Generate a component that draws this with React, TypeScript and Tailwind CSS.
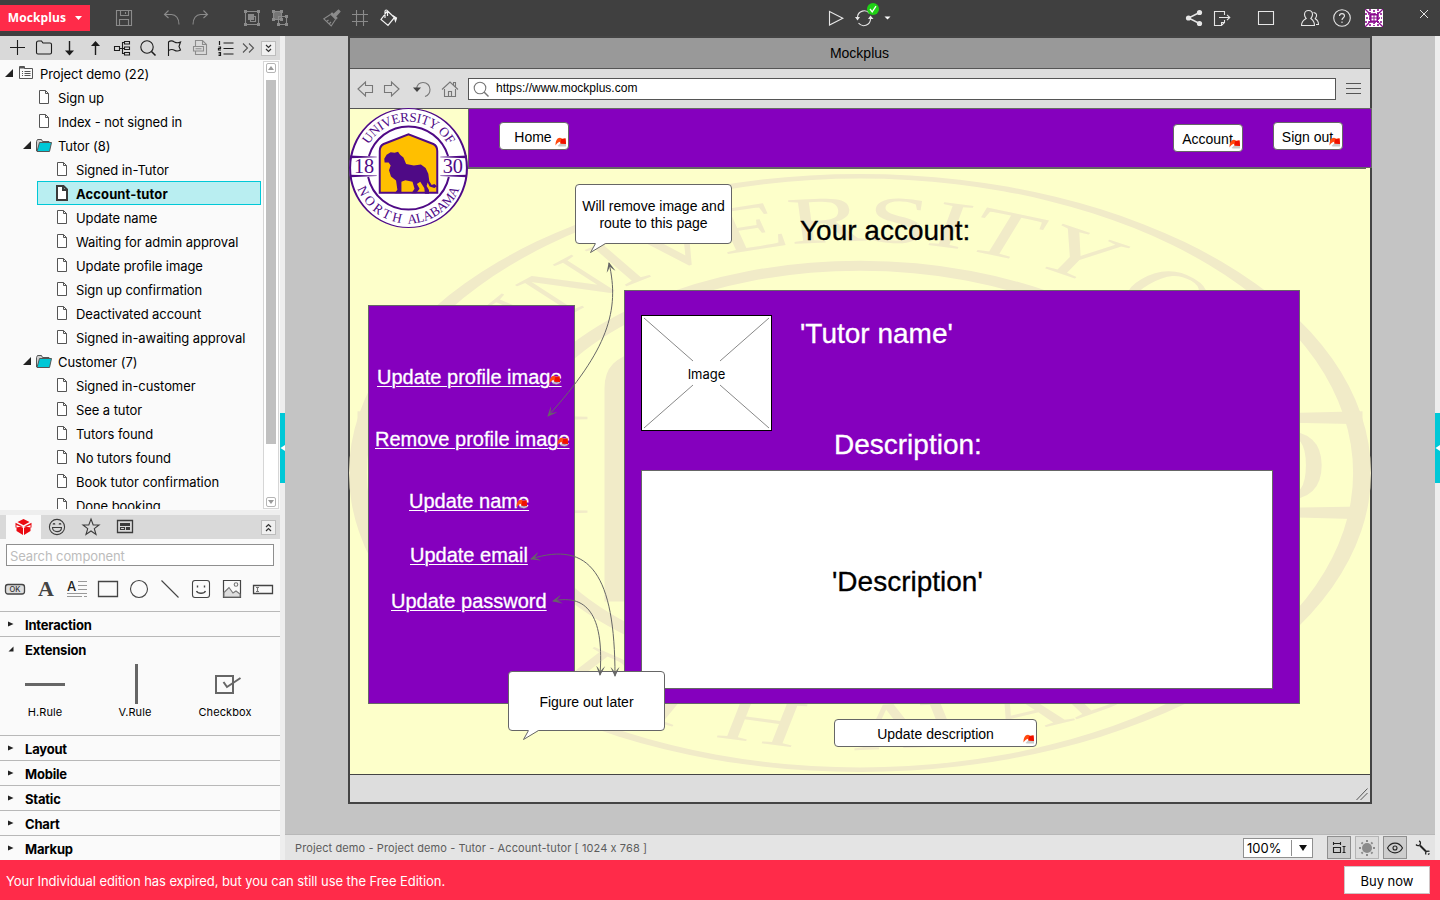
import React from "react";

type IconProps = { children: React.ReactNode; className?: string; size?: number; sw?: number };

function Icon({ children, className = "", size = 18, sw = 1.1 }: IconProps) {
  return (
    <svg
      width={size}
      height={18}
      viewBox={`0 0 ${size} 18`}
      fill="none"
      stroke="currentColor"
      strokeWidth={sw}
      className={`block shrink-0 overflow-visible ${className}`}
    >
      {children}
    </svg>
  );
}

function Seal({ ink, gold, field, className }: { ink: string; gold: string; field: string; className: string }) {
  const id = "seal" + ink.slice(1);
  return (
    <svg viewBox="0 0 120 120" preserveAspectRatio="none" className={className}>
      <defs>
        <path id={id + "t"} d="M19.8 36.8 A46.4 46.4 0 0 1 100.2 36.8" />
        <path id={id + "b"} d="M8.6 80.7 A55.4 55.4 0 0 0 111.4 80.7" />
      </defs>
      <circle cx="60" cy="60" r="59.7" fill={field} />
      <path
        fill={ink}
        fillRule="evenodd"
        d="M0 60 A60 60 0 0 1 120 60 A60 60 0 0 1 0 60 Z M2.1 60 A57.9 59.1 0 0 0 117.9 60 A57.9 59.1 0 0 0 2.1 60 Z"
      />
      <path d="M20.1 48 A41.7 41.7 0 0 1 99.9 48 M19.3 69 A41.7 41.7 0 0 0 100.7 69" fill="none" stroke={ink} strokeWidth="2" />
      <path
        fill={ink}
        d="M1 47.6 L28 48.7 V49.2 L1 50.2 Z M1 66.7 L28 67.5 V68 L1 69.3 Z M119 47.6 L92 48.7 V49.2 L119 50.2 Z M119 66.7 L92 67.5 V68 L119 69.3 Z"
      />
      <g fill={ink} fontFamily="'Liberation Serif', serif" fontSize="13.4">
        <text>
          <textPath href={`#${id}t`} textLength="97">UNIVERSITY OF</textPath>
        </text>
        <text>
          <textPath href={`#${id}b`} textLength="58">NORTH</textPath>
        </text>
        <text>
          <textPath href={`#${id}b`} startOffset="65" textLength="66">ALABAMA</textPath>
        </text>
        <text x="5" y="65.2" fontSize="20.5">18</text>
        <text x="94.500" y="65.2" fontSize="20.5">30</text>
      </g>
      <path d="M31 84.8 V43 C31 39 32 37.5 35 36 L60 26.3 L85 36 C88 37.5 89 39 89 43 V84.8 Z" fill={gold} stroke={ink} strokeWidth="2" />
      <g transform="translate(-4.1,-38.7) scale(.339)">
        <path
          fill={ink}
          d="M117 264 L124 252 L136 245 L148 246 L158 243 L164 252 L174 260 L182 279 L205 284 L226 281 L240 291 L248 308 L251 330 L258 341 L266 338 L274 345 L266 350 L252 346 L246 334 L243 344 L250 356 L250 367 L238 367 L236 350 L224 332 L214 338 L222 352 L212 366 L198 366 L207 352 L201 332 L180 327 L168 332 L168 366 L148 366 L156 355 L152 328 L137 316 L131 298 L136 284 L130 275 L118 275 Z"
        />
      </g>
    </svg>
  );
}

/* ---------- top bar ---------- */

function TopBar() {
  return (
    <header className="flex h-9 shrink-0 items-center bg-[#404040] text-[#8b8b8b]">
      <button className="flex h-[26px] w-[90px] items-center bg-[#ff2b49] pl-[7px] font-['Open_Sans',sans-serif] text-[12px] font-bold text-white">
        <span className="w-[60px] tracking-[0.1px]">Mockplus</span>
        <svg width="7" height="4" viewBox="0 0 7 4" className="ml-2"><path d="M0 0H7L3.5 4Z" fill="#fff" /></svg>
      </button>
      <Icon className="ml-[25px]">
        <path d="M1.5 1.5h15v15h-15zM5.5 1.5v5h8v-5M4.500 16.500v-6h9v6M10.500 3v2" />
      </Icon>
      <Icon className="ml-[30px]"><path d="M1.500 5.500H8.500C13 5.500 16 9.500 16 15.500M5.500 1.500L1.500 5.500L5.500 9" /></Icon>
      <Icon className="ml-[10px]"><path d="M16.500 5.500H9.500C5 5.500 2 9.500 2 15.500M12.500 1.500L16.500 5.500L12.500 9" /></Icon>
      <Icon className="ml-[34px]">
        <path d="M2.500 2.500h13v13h-13z" /><path d="M1 1h3v3h-3zM14 1h3v3h-3zM1 14h3v3h-3zM14 14h3v3h-3z" fill="currentColor" stroke="none" />
        <path d="M5.500 5.500h5v5h-5z" fill="currentColor" /><path d="M10.500 7.500h2v5h-5v-2" />
      </Icon>
      <Icon className="ml-[10px]">
        <path d="M2.500 2.500h8v8h-8z" fill="currentColor" fillOpacity=".7" /><path d="M7.500 7.500h8v8h-8z" />
        <path d="M1 1h3v3h-3zM9 1h3v3h-3zM1 9h3v3h-3zM9 9h3v3h-3zM14 6h3v3h-3zM6 14h3v3h-3zM14 14h3v3h-3z" fill="currentColor" stroke="none" />
      </Icon>
      <Icon className="ml-[34px]">
        <path d="M10.500 5.500L15.500 1L17 2.500L12.700 7.500M9 4L14 9L12.800 10.200L7.800 5.200Z" fill="currentColor" />
        <path d="M7.500 5.500L.8 9.800L8.200 17L12.500 10.500M3.500 12.500L5.500 11M6 15L8 13" />
      </Icon>
      <Icon className="ml-[10px]"><path d="M5.500 1v16M12.500 1v16M1 5.500h16M1 12.500h16" /></Icon>
      <Icon className="ml-[11px] text-[#f2f2f2]" sw={1.2}>
        <path d="M5.500 4.500L1 10.500L8 16.500L14.500 8.500L7.500 2Z M5 9V2.500C5 .5 7.500 .5 7.500 2.500V7" />
        <path d="M12.500 6.500L16.500 9L15.500 12L14.500 9Z" fill="currentColor" />
      </Icon>

      <Icon className="ml-[429px] text-[#e6e6e6]"><path d="M2.500 2.500L15.800 9.200L2.500 16Z" /></Icon>
      <div className="relative ml-[10px] text-[#e6e6e6]">
        <Icon>
          <path d="M2.500 8A6.700 6.700 0 0 1 14.500 4.500M15.500 10A6.700 6.700 0 0 1 3.500 14" />
          <path d="M0 8h5l-2.500 3.500zM13 10h5.500l-3 -3.500z" fill="currentColor" stroke="none" />
        </Icon>
        <svg width="12" height="12" viewBox="0 0 12 12" className="absolute -top-[6px] left-3">
          <circle cx="6" cy="6" r="6" fill="#1fd115" /><path d="M3 6L5.200 8.800L9 3.200" fill="none" stroke="#fff" strokeWidth="1.300" />
        </svg>
      </div>
      <svg width="7" height="4" viewBox="0 0 7 4" className="ml-[11px]"><path d="M.5 .5H6.500L3.500 3.500Z" fill="#fff" /></svg>

      <Icon className="ml-[294px] text-[#e6e6e6]" sw={1.4}>
        <path d="M14.500 3.500L3.500 9L14.500 14.500" />
        <g fill="currentColor" stroke="none"><circle cx="14.500" cy="3.500" r="2.600" /><circle cx="3.500" cy="9" r="2.600" /><circle cx="14.500" cy="14.500" r="2.600" /></g>
      </Icon>
      <Icon className="ml-[10px] text-[#e6e6e6]"><path d="M11.500 6V2.500H1.500V16.500H8.500L11.500 13.500V11M8.500 16.500V13.500H11.500M6 8.500H16.500M14 5.800L16.800 8.500L14 11.200" /></Icon>
      <Icon className="ml-[26px] text-[#e6e6e6]"><path d="M1.500 2.500h15v13h-15z" /></Icon>
      <Icon className="ml-[26px] text-[#e6e6e6]">
        <path d="M7.500 1.500C10 1.500 11.500 3 11.500 5.500C11.500 7.500 10.500 8.500 9.800 9.500C12 11 13.500 12.500 13.500 16.500H.500C.500 12.500 2.500 11 5.200 9.500C4.500 8.500 3.500 7.500 3.500 5.500C3.500 3 5 1.500 7.500 1.500Z" />
        <path d="M12.500 3.500C15 4 15.800 5.500 15.500 7C15.300 8.500 14.500 9 14.200 9.800C16.500 11 17.500 12.500 17.500 15.500H15" />
      </Icon>
      <Icon className="ml-[14px] text-[#e6e6e6]">
        <circle cx="9" cy="9" r="8.300" /><path d="M6.500 7C6.500 3.800 11.500 3.800 11.500 7C11.500 8.700 9 8.800 9 11M9 12.500V14" />
      </Icon>
      <svg width="18" height="18" viewBox="0 0 18 18" className="ml-[14px]">
        <rect width="18" height="18" fill="#fff" />
        <path d="M9 1v16M1 9h16M5 0v18M13 0v18M0 5h18M0 13h18" stroke="#8b0a8f" strokeWidth="1.600" strokeDasharray="2 1" />
        <path d="M0 0l4 4M18 0l-4 4M0 18l4-4M18 18l-4-4" stroke="#8b0a8f" strokeWidth="1.300" />
        <rect x="5" y="5" width="8" height="8" fill="#8b0a8f" />
        <path d="M6.500 6.500h2v2h-2zM9.500 6.500h2v2h-2zM6.500 9.500h2v2h-2zM9.500 9.500h2v2h-2z" fill="#fff" />
      </svg>
      <Icon className="ml-[32px] text-[#e6e6e6]" sw={1}><path d="M5 1L13 9M13 1L5 9" /></Icon>
    </header>
  );
}

/* ---------- project tree ---------- */

function TreeTools() {
  return (
    <div className="flex h-6 shrink-0 items-center gap-2 bg-[#d9d9d9] pl-[9px] text-[#1c1c1c]">
      <Icon><path d="M1 8.500h15M8.500 1v15" /></Icon>
      <Icon><path d="M1.500 13.500V4C1.500 2.500 2 2 3.500 2H6.500L8 4H15C16 4 16.500 4.500 16.500 5.500V13.500C16.500 14.500 16 15 15 15H3C2 15 1.500 14.500 1.500 13.500Z" /></Icon>
      <Icon sw={1.4}><path d="M8.500 2V15" /><path d="M4 11.500H13L8.500 16.500Z" fill="currentColor" stroke="none" /></Icon>
      <Icon sw={1.4}><path d="M8.500 3V16" /><path d="M4 7H13L8.500 2Z" fill="currentColor" stroke="none" /></Icon>
      <Icon><path d="M1.500 7.500h5v4h-5zM6.500 9.500h3M11.500 3.500H9.500V14.500H11.500M9.500 9.500h2M11.500 2.500h5v2.500h-5zM11.500 8h5v2.500h-5zM11.500 13.500h5v2.500h-5z" /></Icon>
      <Icon><circle cx="8" cy="8" r="6.200" /><path d="M12.500 12.500L16.500 16.500" strokeWidth="1.600" /></Icon>
      <Icon><path d="M3.500 17V3C6 1 8 2 9.500 3C11.500 4.200 13.500 4 15.500 3L14 7.500L15.500 11C13 12.500 11 12.200 9.500 11.200C7.500 10 6 10 3.500 11.500" /></Icon>
      <Icon className="text-[#8c8c8c]"><path d="M4.500 7V1.500H11.500L15.500 5.500V15.500H4.500V12M11.500 1.500V5.500H15.500M2.500 7.500h10v4.500h-10zM4.500 9.700h6" /></Icon>
      <Icon><path d="M6.500 4h10M6.500 9.500h10M6.500 15h10" /><path d="M2.500 2v4M1.500 8h2v1.500h-2v1.500h2.500M1.500 13.500h2v3h-2M1.500 15h2" strokeWidth="1.200" /></Icon>
      <Icon size={13} className="-ml-[1px] text-[#555]"><path d="M1 4.500L5.500 9L1 13.500M7 4.500L11.500 9L7 13.500" /></Icon>
      <div className="-ml-[2px]"><ChevronBox down /></div>
    </div>
  );
}

function ChevronBox({ down = false }: { down?: boolean }) {
  return (
    <div className="flex h-[15px] w-[15px] shrink-0 items-center justify-center border border-[#bdbdbd] bg-[#f0f0f0]">
      <svg width="7" height="9" viewBox="0 0 7 9" fill="none" stroke="#333" strokeWidth="1.200" className={down ? "" : "rotate-180"}>
        <path d="M1 1L3.500 3.500L6 1M1 5L3.500 7.500L6 5" />
      </svg>
    </div>
  );
}

type Node = { label: string; kind: "root" | "folder" | "page"; deep?: boolean; active?: boolean };

const nodes: Node[] = [
  { label: "Project demo (22)", kind: "root" },
  { label: "Sign up", kind: "page" },
  { label: "Index - not signed in", kind: "page" },
  { label: "Tutor (8)", kind: "folder" },
  { label: "Signed in-Tutor", kind: "page", deep: true },
  { label: "Account-tutor", kind: "page", deep: true, active: true },
  { label: "Update name", kind: "page", deep: true },
  { label: "Waiting for admin approval", kind: "page", deep: true },
  { label: "Update profile image", kind: "page", deep: true },
  { label: "Sign up confirmation", kind: "page", deep: true },
  { label: "Deactivated account", kind: "page", deep: true },
  { label: "Signed in-awaiting approval", kind: "page", deep: true },
  { label: "Customer (7)", kind: "folder" },
  { label: "Signed in-customer", kind: "page", deep: true },
  { label: "See a tutor", kind: "page", deep: true },
  { label: "Tutors found", kind: "page", deep: true },
  { label: "No tutors found", kind: "page", deep: true },
  { label: "Book tutor confirmation", kind: "page", deep: true },
  { label: "Done booking", kind: "page", deep: true },
];

function Expander() {
  return <svg width="8" height="8" viewBox="0 0 8 8" className="shrink-0"><path d="M8 0V8H0Z" fill="#222" /></svg>;
}

function TreeRow({ node }: { node: Node }) {
  if (node.kind === "root")
    return (
      <div className="flex h-6 items-center pl-[5px]">
        <Expander />
        <svg width="14" height="13" viewBox="0 0 14 13" fill="none" stroke="#555" className="-mt-px ml-[6px]">
          <path d="M.5 12.500V.5H5.500V2.500H13.500V12.500Z" /><path d="M3 5.500h1M3 7.500h1M3 9.500h1M5.500 5.500h6M5.500 7.500h6M5.500 9.500h6" />
          <path d="M0 1h6v1.500h-6z" fill="#555" stroke="none" />
        </svg>
        <span className="ml-[7px] pt-1">{node.label}</span>
      </div>
    );
  if (node.kind === "folder")
    return (
      <div className="flex h-6 items-center pl-[23px]">
        <Expander />
        <svg width="16" height="13" viewBox="0 0 16 13" className="ml-[5px]" stroke="#555">
          <path d="M.5 12V2.500L1.500 .5H5.500L6.500 2.500H13V5" fill="#cfcfcf" /><path d="M3.500 3.500H15.500L13.500 12.500H1Z" fill="#00c8d7" />
        </svg>
        <span className="ml-[6px] pt-1">{node.label}</span>
      </div>
    );
  const box = node.active
    ? "ml-[37px] pl-[18px] w-[224px] border border-[#00c8d7] bg-[#b9eef1] font-bold"
    : node.deep
      ? "pl-[57px]"
      : "pl-[39px]";
  return (
    <div className={`flex h-6 items-center ${box}`}>
      {node.active ? (
        <svg width="12" height="16" viewBox="0 0 12 16" fill="#fff" stroke="#3a3a3a" strokeWidth="2"><path d="M1 1H7.500L11 4.500V15H1ZM7 1V5H11" /></svg>
      ) : (
        <svg width="10" height="14" viewBox="0 0 10 14" fill="#fff" stroke="#555"><path d="M.5 .5H6.500L9.500 3.500V13.500H.5ZM6.500 .5V3.500H9.500" /></svg>
      )}
      <span className={node.active ? "ml-2 pt-1 tracking-[0.12px]" : "ml-[9px] pt-1"}>{node.label}</span>
    </div>
  );
}

function ScrollButton({ up = false }: { up?: boolean }) {
  return (
    <div className="flex h-[10px] w-[10px] items-center justify-center rounded-[2px] border border-[#b5b5b5]">
      <svg width="6" height="4" viewBox="0 0 6 4" className={up ? "rotate-180" : ""}><path d="M0 0H6L3 4Z" fill="#999" /></svg>
    </div>
  );
}

function ProjectTree() {
  return (
    <div className="flex h-[450px] shrink-0 bg-[#fafafa] pt-px">
      <div className="h-[448px] w-[263px] overflow-hidden text-[13px] tracking-[-0.08px] text-black">
        {nodes.map((n) => <TreeRow key={n.label} node={n} />)}
      </div>
      <div className="flex h-[448px] w-4 flex-col items-center border border-[#d6d6d6] bg-white pt-px">
        <ScrollButton up />
        <div className="mt-[7px] h-[364px] w-[10px] bg-[#c0c0c0]" />
        <div className="mt-[53px]"><ScrollButton /></div>
      </div>
    </div>
  );
}

/* ---------- component library ---------- */

function LibraryTabs() {
  return (
    <div className="flex h-6 shrink-0 items-center bg-[#d9d9d9] pl-[6px] text-[#3c3c3c]">
      <div className="flex h-6 w-[35px] items-center justify-center bg-[#fafafa]">
        <svg width="17" height="16" viewBox="0 0 17 16" fill="#ea0b12">
          <path d="M8.500 0L14.500 3L8.500 6.200L2.500 3ZM.500 3.800L7.900 7.600L.5 8.500ZM16.500 3.800L9.100 7.600L16.500 8.500ZM1.500 6V12L8 16V8.800ZM15.500 6V12L9 16V8.800Z" />
        </svg>
      </div>
      <Icon className="ml-[7px]"><circle cx="9" cy="9" r="7.600" /><path d="M4.500 9.500H13.500C13.500 15 4.500 15 4.500 9.500ZM5 6.500C5.500 5.300 6.500 5.300 7 6.500M11 6.500C11.500 5.300 12.500 5.300 13 6.500" /></Icon>
      <Icon className="ml-4"><path d="M9 1L11.200 7H17L12.300 10.600L14 16.500L9 13L4 16.500L5.700 10.600L1 7H6.800Z" /></Icon>
      <Icon className="ml-4"><path d="M1.500 2.500h15v12h-15z" strokeWidth="1.300" /><path d="M4 5h10v3h-10z" fill="currentColor" stroke="none" /><path d="M4.500 9.500h4v2h-4z" /><path d="M10 9h4v3h-4z" fill="currentColor" stroke="none" /></Icon>
      <div className="ml-[127px]"><ChevronBox /></div>
    </div>
  );
}

function Palette() {
  return (
    <div className="flex items-center gap-[9px] pl-1 text-[#444]">
      <Icon size={22}>
        <rect x="1.500" y="4.500" width="19" height="9.500" rx="2.500" fill="#dedede" strokeWidth="1.300" />
        <text x="11" y="12" textAnchor="middle" fontSize="7.500" fontWeight="500" fontFamily="Inter, sans-serif" fill="#333" stroke="none">OK</text>
      </Icon>
      <Icon size={22}><text x="11" y="16" textAnchor="middle" fontSize="22" fontWeight="700" fontFamily="'Liberation Serif', serif" fill="#444" stroke="none">A</text></Icon>
      <Icon size={22}>
        <text x="1" y="11" fontSize="13" fontWeight="500" fontFamily="Inter, sans-serif" fill="#222" stroke="none">A</text>
        <path d="M12 1.500h9M12 5.500h9M12 9.500h9M1 13.500h20M1 16.500h15M18 16.500h3" stroke="#999" />
      </Icon>
      <Icon size={22} sw={1.300}><path d="M1.500 1.500h19v15h-19z" /></Icon>
      <Icon size={22}><circle cx="11" cy="9" r="8.500" /></Icon>
      <Icon size={22}><path d="M2.500 .5L19.500 17.500" /></Icon>
      <Icon size={22}><rect x="2.500" y=".5" width="17" height="17" rx="2.500" /><path d="M6.500 11C8 14 14 14 15.500 11M7.500 5.500v2M14.500 5.500v2" strokeWidth="1.400" /></Icon>
      <Icon size={22}><path d="M2.500 .5h17v17h-17z" strokeWidth="1.200" /><path d="M3 12.500L8 7.500L12 13L15 11L19 14V17H3Z" fill="#dedede" stroke="#777" /><circle cx="15" cy="4.500" r="1.800" stroke="#777" /></Icon>
      <Icon size={22}><path d="M1.500 5.500h19v8h-19z" strokeWidth="1.300" /><path d="M4 7.500h3M4 11.500h3M5.500 7.500v4" stroke="#777" /></Icon>
    </div>
  );
}

function Section({ title, open = false }: { title: string; open?: boolean }) {
  return (
    <div className="flex h-[25px] shrink-0 items-center border-t border-[#b8b8b8] pl-2 text-[13px] font-bold tracking-[-0.2px] text-black">
      <svg width="6" height="6" viewBox="0 0 6 6" className="-mt-[1px]">{open ? <path d="M5.500 .5V5.500H.5Z" fill="#222" /> : <path d="M0 .5L5.500 3L0 5.500Z" fill="#222" />}</svg>
      <span className="ml-[11px] pt-[3px]">{title}</span>
    </div>
  );
}

function ExtensionItem({ label, children }: { label: string; children: React.ReactNode }) {
  return (
    <div className="flex w-[90px] flex-col items-center">
      <svg width="40" height="40" viewBox="0 0 40 40" fill="none" stroke="#666">{children}</svg>
      <span className="mt-[1px] text-[11px] leading-[14px] tracking-[0.1px]">{label}</span>
    </div>
  );
}

function Library() {
  return (
    <div className="flex min-h-0 flex-1 flex-col overflow-hidden bg-[#fafafa]">
      <LibraryTabs />
      <div className="mx-[6px] mt-[5px] flex h-[22px] w-[268px] shrink-0 items-center border border-[#8f8f8f] bg-white pt-[3px] pl-[3px] text-[13px] tracking-[-0.1px] text-[#bcbcbc]">
        Search component
      </div>
      <div className="mt-[14px] mb-[13px]"><Palette /></div>
      <Section title="Interaction" />
      <Section title="Extension" open />
      <div className="flex h-[74px] shrink-0 pt-[3px]">
        <ExtensionItem label="H.Rule"><path d="M0 20.500H40" strokeWidth="3" /></ExtensionItem>
        <ExtensionItem label="V.Rule"><path d="M21.500 0V40" strokeWidth="3" /></ExtensionItem>
        <ExtensionItem label="Checkbox"><path d="M11 12h17v17h-17z" strokeWidth="2" /><path d="M18.500 18L22 23L35.500 14" strokeWidth="2" /></ExtensionItem>
      </div>
      <Section title="Layout" />
      <Section title="Mobile" />
      <Section title="Static" />
      <Section title="Chart" />
      <Section title="Markup" />
    </div>
  );
}

/* ---------- canvas ---------- */

function LinkMark({ at }: { at: string }) {
  return (
    <svg width="12" height="10" viewBox="0 0 12 10" className={`absolute ${at}`}>
      <path d="M2.500 9L6 5.500H11V9.500H4Z" fill="#777" opacity=".4" />
      <path d="M.5 8.500C.5 4 2 .8 5 .8L7.500 1.800L10.500 1.200L11 7L5.500 6.500L5 4.800C3 5 2 6.500 .5 8.500Z" fill="#ff4a10" />
      <path d="M6 2.200L10.500 1.400L11 7L5.500 6.500Z" fill="#f01000" />
    </svg>
  );
}

function Box({ at, children }: { at: string; children?: React.ReactNode }) {
  return <div className={`absolute border border-[#666] ${at}`}>{children}</div>;
}

function CanvasButton({ at, children }: { at: string; children: React.ReactNode }) {
  return <div className={`absolute flex h-7 items-center justify-center rounded-[4px] border border-[#666] bg-white text-[14px] ${at}`}>{children}</div>;
}

function Label({ at, children }: { at: string; children: React.ReactNode }) {
  return <div className={`absolute whitespace-nowrap [-webkit-text-stroke:0.3px] ${at}`}>{children}</div>;
}

function Balloon({ at, children }: { at: string; children: React.ReactNode }) {
  return (
    <div className={`absolute flex h-[60px] w-[157px] items-center justify-center rounded-[4px] border border-[#666] bg-white text-center text-[14px] leading-[17px] ${at}`}>
      <div className="pt-[2px]">{children}</div>
      <svg width="18" height="12" viewBox="0 0 18 12" className="absolute top-[57px] left-[13px]">
        <path d="M6.500 1L1.500 10.500L17 1Z" fill="#fff" /><path d="M6.500 1.500L1.500 10.500L16.500 1.500" fill="none" stroke="#666" />
      </svg>
    </div>
  );
}

function BrowserBar() {
  return (
    <div className="flex h-10 shrink-0 items-center border-b border-[#555] bg-[#ddd] pl-[7px] text-[#777]">
      <Icon><path d="M1 9L8.500 2V5.500H15.500V12.500H8.500V16Z" /></Icon>
      <Icon className="ml-2"><path d="M16 9L8.500 2V5.500H1.500V12.500H8.500V16Z" /></Icon>
      <Icon className="ml-3"><path d="M3.500 9C4 5 6.500 2.500 10 2.500C14 2.500 17 5.500 17 9.500C17 13 15 15.500 12 16.500" /><path d="M0 7.500H8L4 12Z" fill="#444" stroke="none" /></Icon>
      <Icon className="ml-[10px]"><path d="M1 9.500L9 2L17 9.500M3.500 9V16.500H14.500V9M7.500 16.500V11.500H10.500V16.500M12.500 5V2.500H14.500V6.800" /></Icon>
      <div className="ml-[9px] flex h-[22px] w-[868px] items-center border border-[#555] bg-white">
        <Icon className="ml-[3px]"><circle cx="8" cy="8" r="5.800" /><path d="M12 12L16.500 16.500" strokeWidth="1.400" /></Icon>
        <span className="-mt-[2px] ml-[6px] text-[12px] text-black">https://www.mockplus.com</span>
      </div>
      <svg width="15" height="11" viewBox="0 0 15 11" stroke="#555" className="ml-[10px]"><path d="M0 .5h15M0 5.500h15M0 10.500h15" /></svg>
    </div>
  );
}

function Connectors() {
  return (
    <svg width="1020" height="665" viewBox="350 109 1020 665" fill="none" stroke="#666" className="absolute top-0 left-0">
      <defs>
        <marker id="tip" viewBox="0 0 10 10" refX="9" refY="5" markerWidth="10" markerHeight="10" orient="auto-start-reverse" markerUnits="userSpaceOnUse">
          <path d="M0 .5L10 5L0 9.500L2 7.500L5.500 5L2 2.500Z" fill="#666" stroke="none" />
        </marker>
      </defs>
      <path d="M609 263C620 310 608 350 548 416" markerStart="url(#tip)" markerEnd="url(#tip)" />
      <path d="M531 559C590 540 615 575 615 676" markerStart="url(#tip)" markerEnd="url(#tip)" />
      <path d="M553 601C590 593 604 620 600 675" markerStart="url(#tip)" markerEnd="url(#tip)" />
    </svg>
  );
}

function MockPage() {
  return (
    <div className="relative flex-1 bg-[#fdffca]">
      <Seal ink="#f1ebc8" gold="#f1ebc8" field="none" className="absolute top-[65px] -left-px h-[598px] w-[1022px]" />
      <Box at="-top-px left-[118px] h-[60px] w-[904px] bg-[#8500be]" />
      <div className="absolute top-[59px] left-[118px] h-px w-[898px] bg-[#666]" />
      <Seal ink="#4f0a86" gold="#ffbf00" field="#ffffff" className="absolute -top-px -left-px h-[120px] w-[119px]" />

      <CanvasButton at="top-[13px] left-[149px] w-[70px] pt-[2px] pr-[2px]">Home</CanvasButton>
      <CanvasButton at="top-[15px] left-[823px] w-[70px] pt-[2px] pr-[1px]">Account</CanvasButton>
      <CanvasButton at="top-[13px] left-[923px] w-[70px] pt-[2px] pr-[1px]">Sign out</CanvasButton>
      <LinkMark at="top-[28px] left-[205px]" />
      <LinkMark at="top-[30px] left-[879px]" />
      <LinkMark at="top-[28px] left-[979px]" />

      <Label at="top-[106px] left-[450px] text-[28px] leading-8">Your account:</Label>

      <Box at="top-[196px] left-[18px] h-[399px] w-[207px] bg-[#8500be]" />
      <div className="text-white">
        <Label at="top-[256px] left-[27px] text-[20px] leading-6 underline underline-offset-2 decoration-1">Update profile image</Label>
        <Label at="top-[318px] left-[25px] text-[20px] leading-6 underline underline-offset-2 decoration-1">Remove profile image</Label>
        <Label at="top-[380px] left-[59px] text-[20px] leading-6 underline underline-offset-2 decoration-1">Update name</Label>
        <Label at="top-[434px] left-[60px] text-[20px] leading-6 underline underline-offset-2 decoration-1">Update email</Label>
        <Label at="top-[480px] left-[41px] text-[20px] leading-6 underline underline-offset-2 decoration-1">Update password</Label>
      </div>
      <LinkMark at="top-[266px] left-[199px]" />
      <LinkMark at="top-[328px] left-[207px]" />
      <LinkMark at="top-[390px] left-[166px]" />

      <Box at="top-[181px] left-[274px] h-[414px] w-[676px] bg-[#8500be]" />
      <div className="absolute top-[206px] left-[291px] h-[116px] w-[131px] border border-black bg-white">
        <svg width="129" height="114" viewBox="0 0 129 114" stroke="#888" className="block">
          <path d="M2 2L51 45M127 2L78 45M2 112L51 69M127 112L78 69" />
        </svg>
        <span className="absolute inset-x-0 top-[50px] text-center font-[Inter,sans-serif] text-[13px] leading-4">Image</span>
      </div>
      <Label at="top-[209px] left-[450px] text-[28px] leading-8 text-white">'Tutor name'</Label>
      <Label at="top-[320px] left-[484px] text-[28px] leading-8 text-white">Description:</Label>
      <Box at="top-[361px] left-[291px] h-[219px] w-[632px] bg-white" />
      <Label at="top-[457px] left-[482px] text-[28px] leading-8">'Description'</Label>

      <CanvasButton at="top-[610px] left-[484px] w-[203px] pt-[2px]">Update description</CanvasButton>
      <LinkMark at="top-[625px] left-[673px]" />

      <Balloon at="top-[75px] left-[225px]">Will remove image and<br />route to this page</Balloon>
      <Balloon at="top-[562px] left-[158px]">Figure out later</Balloon>
      <Connectors />
    </div>
  );
}

function Mockup() {
  return (
    <div className="ml-[63px] flex h-[768px] w-[1024px] shrink-0 flex-col border-2 border-[#444] font-['Liberation_Sans',Arial,sans-serif] text-black">
      <div className="flex h-[31px] shrink-0 items-center justify-center border-b border-[#555] bg-[#999] pr-[1px] text-[14px]">Mockplus</div>
      <BrowserBar />
      <MockPage />
      <div className="flex h-7 shrink-0 items-end justify-end border-t border-[#444] bg-[#ddd] pr-[2px] pb-[2px]">
        <svg width="12" height="12" viewBox="0 0 12 12" stroke="#555"><path d="M.5 12L11.500 .5M4.500 12L11.500 5" /></svg>
      </div>
    </div>
  );
}

function StatusBar() {
  return (
    <div className="flex h-[26px] shrink-0 items-center border-t border-[#b8b8b8] bg-[#e4e4e4] pl-[10px]">
      <span className="w-[352px] pt-[2px] text-[11px] tracking-[0.1px] whitespace-nowrap text-[#5c5c5c]">
        Project demo - Project demo - Tutor - Account-tutor [ 1024 x 768 ]
      </span>
      <div className="ml-[596px] flex h-5 w-[70px] items-center border border-[#8f8f8f] bg-white text-[13px] text-black">
        <span className="w-[47px] pt-[2px] pl-[3px]">100%</span>
        <span className="h-4 w-px bg-[#8f8f8f]" />
        <svg width="8" height="6" viewBox="0 0 8 6" className="ml-[7px]"><path d="M0 0H8L4 6Z" fill="#111" /></svg>
      </div>
      <div className="ml-[14px] flex h-[23px] w-6 items-center justify-center border border-[#8f8f8f] bg-[#cdcdcd] text-[#222]">
        <Icon size={14}><path d="M1.500 4.500h7M1.500 3v3M8.500 3v3M1.500 8.500h7v5h-7zM10.500 7.500h3M10.500 13.500h3M12 7.500v6" /></Icon>
      </div>
      <div className="ml-1 flex h-[23px] w-6 items-center justify-center border border-[#b5b5b5] bg-[#dcdcdc] text-[#8a8a8a]">
        <Icon sw={2}>
          <circle cx="9" cy="9" r="5" fill="currentColor" stroke="none" />
          <path d="M9 1v2M9 15v2M1 9h2M15 9h2M3.500 3.500l1.300 1.300M13.200 13.200l1.300 1.300M3.500 14.500l1.300-1.300M13.200 4.800l1.300-1.300" />
        </Icon>
      </div>
      <div className="ml-1 flex h-[23px] w-6 items-center justify-center border border-[#8f8f8f] bg-[#cdcdcd] text-[#222]">
        <Icon><path d="M1.500 9C5 2.500 13 2.500 16.500 9C13 15.500 5 15.500 1.500 9Z" /><circle cx="9" cy="9" r="2" /></Icon>
      </div>
      <Icon className="ml-[7px] text-[#222]" sw={1.3}>
        <path d="M6 6.500L12 12.500" strokeWidth="2" />
        <path d="M2 5.500C3.500 7.500 6.500 6.800 6.500 4C6.500 2.800 5.800 2.200 5 2M12 15.500C10.800 13.500 12.200 11.500 15.500 12.300M14 15.500L15.500 14.500" />
      </Icon>
    </div>
  );
}

function EdgeHandle() {
  return (
    <div className="w-[5px] shrink-0 bg-[#eee] pt-[377px]">
      <div className="flex h-[70px] items-center bg-[#00c8d7]">
        <svg width="5" height="6" viewBox="0 0 5 6"><path d="M5 0V6L.5 3Z" fill="#fff" /></svg>
      </div>
    </div>
  );
}

export default function App() {
  return (
    <div className="flex h-[900px] w-[1440px] flex-col overflow-hidden font-[Inter,sans-serif]">
      <TopBar />
      <div className="flex min-h-0 flex-1">
        <aside className="flex w-[280px] shrink-0 flex-col">
          <TreeTools />
          <ProjectTree />
          <div className="h-[5px] shrink-0 bg-[#eee]" />
          <Library />
        </aside>
        <EdgeHandle />
        <main className="flex w-[1150px] shrink-0 flex-col bg-[#c4c4c4]">
          <div className="min-h-0 flex-1"><Mockup /></div>
          <StatusBar />
        </main>
        <EdgeHandle />
      </div>
      <footer className="flex h-10 shrink-0 items-center justify-between bg-[#ff2b49] pr-[10px] pl-[6px] text-[13px] text-white">
        <span className="pt-[3px] tracking-[-0.06px]">Your Individual edition has expired, but you can still use the Free Edition.</span>
        <button className="h-7 w-[86px] border border-[#d0c4c6] bg-white pt-[3px] text-black">Buy now</button>
      </footer>
    </div>
  );
}
